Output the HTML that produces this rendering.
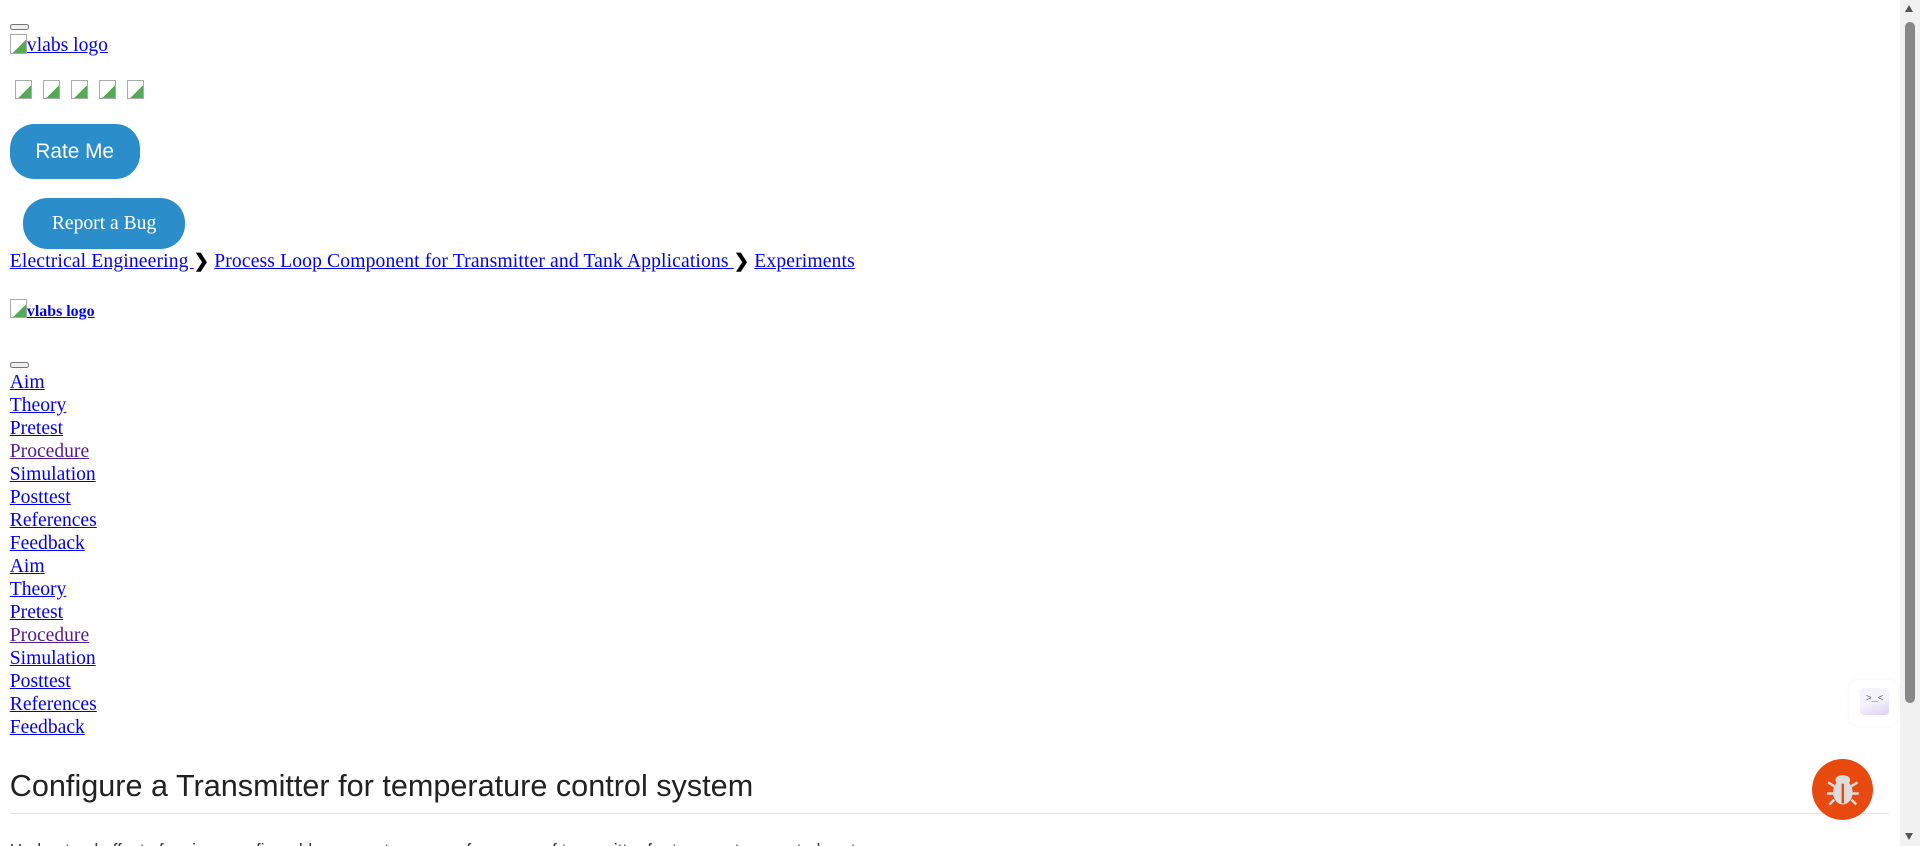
<!DOCTYPE html>
<html><head><meta charset="utf-8">
<style>
html,body{margin:0;padding:0;overflow:hidden;background:#fff;}
#w{zoom:1.2245;width:1568px;height:691px;position:relative;font-family:"Liberation Serif",serif;font-size:16px;color:#000;}
a{color:#0000ee;}
.ab{position:absolute;}
.bi{display:inline-block;width:14px;height:16px;border:1px solid #aaa;background:linear-gradient(135deg,#fff 60%,#5a5 60%);box-sizing:border-box;vertical-align:-2px;}
.nav a{display:block;line-height:18.75px;}
.sb{position:absolute;right:0;top:0;width:16px;height:691px;background:#f1f1f1;}
</style></head><body><div id="w">
<div class="ab" style="left:8px;top:20px;width:14px;height:3px;border:1px solid #767676;border-radius:2px;background:#efefef"></div>
<div class="ab" style="left:8px;top:28px;"><a href="#"><span class="bi"></span>vlabs logo</a></div>
<div class="ab" style="left:12px;top:65px;"><span class="bi" style="margin-right:9px"></span><span class="bi" style="margin-right:9px"></span><span class="bi" style="margin-right:9px"></span><span class="bi" style="margin-right:9px"></span><span class="bi"></span></div>
<div class="ab" style="left:8px;top:101px;width:106px;height:45px;border-radius:20px;background:#2b8ecb;color:#fff;font-family:'Liberation Sans',sans-serif;font-size:17px;line-height:45px;text-align:center">Rate Me</div>
<div class="ab" style="left:19px;top:162px;width:132px;height:41px;border-radius:20px;background:#2b8ecb;color:#fff;font-size:16px;line-height:42px;text-align:center">Report a Bug</div>
<div class="ab" style="left:8px;top:204px;white-space:nowrap;letter-spacing:0.12px"><a href="#">Electrical Engineering </a><b style="font-family:'Liberation Sans';font-size:15px">&#10095;</b> <a href="#">Process Loop Component for Transmitter and Tank Applications </a><b style="font-family:'Liberation Sans';font-size:15px">&#10095;</b> <a href="#">Experiments</a></div>
<div class="ab" style="left:8px;top:244px;font-size:13px;font-weight:bold"><a href="#"><span class="bi"></span>vlabs logo</a></div>
<div class="ab" style="left:8px;top:296px;width:14px;height:3px;border:1px solid #767676;border-radius:2px;background:#efefef"></div>
<div class="ab nav" style="left:8px;top:304px;">
<a href="#">Aim</a><a href="#">Theory</a><a href="#">Pretest</a><a href="#" style="color:#551a8b">Procedure</a><a href="#">Simulation</a><a href="#">Posttest</a><a href="#">References</a><a href="#">Feedback</a>
<a href="#">Aim</a><a href="#">Theory</a><a href="#">Pretest</a><a href="#" style="color:#551a8b">Procedure</a><a href="#">Simulation</a><a href="#">Posttest</a><a href="#">References</a><a href="#">Feedback</a>
</div>
<div class="ab" style="left:8px;top:628px;font-family:'Liberation Sans',sans-serif;font-size:25px;color:#222;white-space:nowrap">Configure a Transmitter for temperature control system</div>
<div class="ab" style="left:8px;top:664px;width:1535px;height:1px;background:#e2e2e2"></div>
<div class="ab" style="left:8px;top:686px;font-family:'Liberation Sans',sans-serif;font-size:14px;color:#333;white-space:nowrap">Understand effect of various configurable parameters on performance of transmitter for temperature control system</div>
<div class="ab" style="left:1510px;top:555px;width:40px;height:38px;border-radius:8px;background:#fff;box-shadow:0 0 4px rgba(0,0,0,.06)"></div>
<div class="ab" style="left:1519px;top:562px;width:24px;height:22px;border-radius:3px;background:linear-gradient(160deg,#f4f2fb 50%,#ddd0f5);font-family:'Liberation Mono';font-size:8px;color:#666;text-align:center;line-height:18px">&gt;_&lt;</div>
<div class="ab" style="left:1480px;top:620px;width:50px;height:50px;border-radius:50%;background:#e8490f"></div>
<svg class="ab" style="left:1488px;top:628px" width="34" height="34" viewBox="0 0 34 34"><g fill="#ddd" stroke="#ddd" stroke-width="2"><ellipse cx="17" cy="19" rx="7" ry="9"/><ellipse cx="17" cy="9" rx="5" ry="3"/><path d="M10 14 L5 11 M24 14 L29 11 M10 20 L4 20 M24 20 L30 20 M10 25 L6 29 M24 25 L28 29" fill="none"/></g><line x1="17" y1="12" x2="17" y2="28" stroke="#e8490f" stroke-width="2"/></svg>
<div class="sb"><div style="position:absolute;left:4px;top:18px;width:8px;height:556px;border-radius:4px;background:#888"></div>
<div style="position:absolute;left:4px;top:4px;width:0;height:0;border-left:4px solid transparent;border-right:4px solid transparent;border-bottom:6px solid #555"></div>
<div style="position:absolute;left:4px;top:680px;width:0;height:0;border-left:4px solid transparent;border-right:4px solid transparent;border-top:6px solid #555"></div></div>
</div></body></html>
